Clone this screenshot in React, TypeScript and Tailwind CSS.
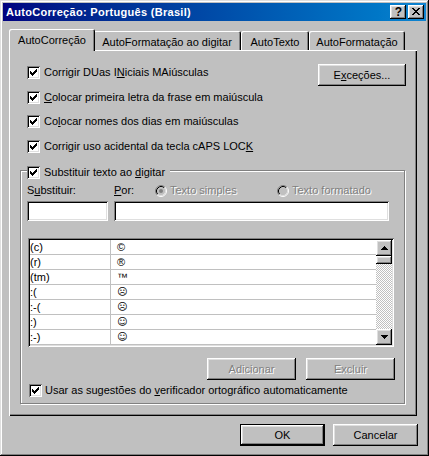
import React from "react";

const raised =
  "shadow-[inset_-1px_-1px_0_#000,inset_1px_1px_0_#fff,inset_-2px_-2px_0_#808080,inset_2px_2px_0_#dfdfdf]";
const sunken =
  "shadow-[inset_1px_1px_0_#808080,inset_-1px_-1px_0_#fff,inset_2px_2px_0_#000,inset_-2px_-2px_0_#dfdfdf]";

function Check() {
  return (
    <span className={`w-[13px] h-[13px] shrink-0 bg-white flex items-center justify-center ${sunken}`}>
      <svg width="7" height="7" viewBox="0 0 7 7" shapeRendering="crispEdges">
        <rect x="6" y="0" width="1" height="1" fill="#000" />
        <rect x="5" y="1" width="2" height="1" fill="#000" />
        <rect x="0" y="2" width="1" height="1" fill="#000" />
        <rect x="4" y="2" width="3" height="1" fill="#000" />
        <rect x="0" y="3" width="2" height="1" fill="#000" />
        <rect x="3" y="3" width="3" height="1" fill="#000" />
        <rect x="0" y="4" width="5" height="1" fill="#000" />
        <rect x="1" y="5" width="3" height="1" fill="#000" />
        <rect x="2" y="6" width="1" height="1" fill="#000" />
      </svg>
    </span>
  );
}

function Radio({ dot }: { dot?: boolean }) {
  return (
    <svg width="12" height="12" viewBox="0 0 12 12" className="shrink-0">
      <circle cx="6" cy="6" r="5" fill="#c0c0c0" />
      <path d="M2.11 9.89 A5.5 5.5 0 0 1 9.89 2.11" fill="none" stroke="#808080" strokeWidth="1" />
      <path d="M9.89 2.11 A5.5 5.5 0 0 1 2.11 9.89" fill="none" stroke="#fff" strokeWidth="1" />
      <path d="M2.82 9.18 A4.5 4.5 0 0 1 9.18 2.82" fill="none" stroke="#000" strokeWidth="1" />
      <path d="M9.18 2.82 A4.5 4.5 0 0 1 2.82 9.18" fill="none" stroke="#dfdfdf" strokeWidth="1" />
      {dot && <circle cx="6" cy="6" r="2" fill="#808080" />}
    </svg>
  );
}

function CheckRow({ children, className = "" }: { children: React.ReactNode; className?: string }) {
  return (
    <div className={`flex items-center h-[13px] gap-[4px] whitespace-nowrap ${className}`}>
      <Check />
      <span>{children}</span>
    </div>
  );
}

function Arrow({ down }: { down?: boolean }) {
  return (
    <svg width="7" height="4" viewBox="0 0 7 4" shapeRendering="crispEdges">
      {down ? (
        <>
          <rect x="0" y="0" width="7" height="1" fill="#000" />
          <rect x="1" y="1" width="5" height="1" fill="#000" />
          <rect x="2" y="2" width="3" height="1" fill="#000" />
          <rect x="3" y="3" width="1" height="1" fill="#000" />
        </>
      ) : (
        <>
          <rect x="3" y="0" width="1" height="1" fill="#000" />
          <rect x="2" y="1" width="3" height="1" fill="#000" />
          <rect x="1" y="2" width="5" height="1" fill="#000" />
          <rect x="0" y="3" width="7" height="1" fill="#000" />
        </>
      )}
    </svg>
  );
}

const rows: [string, string, boolean][] = [
  ["(c)", "©", false],
  ["(r)", "®", false],
  ["(tm)", "™", false],
  [":(", "☹", true],
  [":-(", "☹", true],
  [":)", "☺", true],
  [":-)", "☺", true],
];

export default function App() {
  return (
    <div
      className={`w-[429px] h-[456px] bg-[#c0c0c0] p-[3px] flex flex-col font-['Liberation_Sans',Arial,sans-serif] text-[11px] leading-[13px] text-black select-none shadow-[inset_-1px_-1px_0_#000,inset_1px_1px_0_#dfdfdf,inset_-2px_-2px_0_#808080,inset_2px_2px_0_#fff]`}
    >
      {/* Title bar */}
      <div className="h-[18px] shrink-0 flex items-center bg-gradient-to-r from-[#000080] to-[#1084d0] pl-[3px] pr-[2px]">
        <span className="flex-1 font-bold text-white leading-[18px] tracking-[0.3px] whitespace-nowrap">
          AutoCorreção: Português (Brasil)
        </span>
        <div className="flex gap-[2px]">
          <div className={`w-[16px] h-[14px] bg-[#c0c0c0] flex items-center justify-center ${raised}`}>
            <span className="font-bold text-[12px] leading-none pl-[1px]">?</span>
          </div>
          <div className={`w-[16px] h-[14px] bg-[#c0c0c0] flex items-center justify-center ${raised}`}>
            <svg width="8" height="7" viewBox="0 0 8 7" shapeRendering="crispEdges" className="ml-[-1px] mt-[-1px]">
              <rect x="0" y="0" width="2" height="1" fill="#000" />
              <rect x="6" y="0" width="2" height="1" fill="#000" />
              <rect x="1" y="1" width="2" height="1" fill="#000" />
              <rect x="5" y="1" width="2" height="1" fill="#000" />
              <rect x="2" y="2" width="4" height="1" fill="#000" />
              <rect x="3" y="3" width="2" height="1" fill="#000" />
              <rect x="2" y="4" width="4" height="1" fill="#000" />
              <rect x="1" y="5" width="2" height="1" fill="#000" />
              <rect x="5" y="5" width="2" height="1" fill="#000" />
              <rect x="0" y="6" width="2" height="1" fill="#000" />
              <rect x="6" y="6" width="2" height="1" fill="#000" />
            </svg>
          </div>
        </div>
      </div>

      {/* Tabs */}
      <div className="mt-[8px] ml-[6px] flex items-end h-[22px] -mb-[1px] relative z-10 whitespace-nowrap">
        <div className="w-[86px] h-[22px] mr-[-2px] relative z-10 bg-[#c0c0c0] text-center pt-[5px] rounded-t-[2px] shadow-[inset_1px_1px_0_#fff,inset_-1px_0_0_#000,inset_-2px_0_0_#808080]">
          AutoCorreção
        </div>
        <div className="w-[148px] h-[19px] mb-[1px] bg-[#c0c0c0] text-center pt-[5px] rounded-t-[2px] shadow-[inset_1px_1px_0_#fff,inset_-1px_0_0_#000,inset_-2px_0_0_#808080]">
          AutoFormatação ao digitar
        </div>
        <div className="w-[68px] h-[19px] mb-[1px] bg-[#c0c0c0] text-center pt-[5px] rounded-t-[2px] shadow-[inset_1px_1px_0_#fff,inset_-1px_0_0_#000,inset_-2px_0_0_#808080]">
          AutoTexto
        </div>
        <div className="w-[96px] h-[19px] mb-[1px] bg-[#c0c0c0] text-center pt-[5px] rounded-t-[2px] shadow-[inset_1px_1px_0_#fff,inset_-1px_0_0_#000,inset_-2px_0_0_#808080]">
          AutoFormatação
        </div>
      </div>

      {/* Panel */}
      <div className="w-[408px] h-[366px] ml-[6px] bg-[#c0c0c0] flex flex-col shrink-0 shadow-[inset_1px_1px_0_#fff,inset_-1px_-1px_0_#000,inset_-2px_-2px_0_#808080]">
        <div className="flex mt-[14px] pl-[18px] pr-[11px]">
          <div className="flex flex-col pt-[2px]">
            <CheckRow>
              Corrigir DUas I<span className="underline underline-offset-[1px]">N</span>iciais MAiúsculas
            </CheckRow>
            <CheckRow className="mt-[12px]">
              <span className="underline underline-offset-[1px]">C</span>olocar primeira letra da frase em maiúscula
            </CheckRow>
            <CheckRow className="mt-[11px]">
              Co<span className="underline underline-offset-[1px]">l</span>ocar nomes dos dias em maiúsculas
            </CheckRow>
            <CheckRow className="mt-[12px]">
              Corrigir uso acidental da tecla cAPS LOC<span className="underline underline-offset-[1px]">K</span>
            </CheckRow>
          </div>
          <div className={`ml-auto w-[88px] h-[22px] flex items-center justify-center ${raised}`}>
            <span>
              E<span className="underline underline-offset-[1px]">x</span>ceções...
            </span>
          </div>
        </div>

        {/* Group box */}
        <div className="mt-[17px] ml-[11px] w-[385px] flex flex-col border border-[#808080] pb-[6px] shadow-[inset_1px_1px_0_#fff,1px_1px_0_#fff]">
          <div className="-mt-[5px] ml-[6px] self-start flex items-center gap-[4px] pr-[5px] bg-[#c0c0c0] h-[13px] whitespace-nowrap">
            <Check />
            <span>
              Substituir texto ao <span className="underline underline-offset-[1px]">d</span>igitar
            </span>
          </div>

          <div className="mt-[5px] flex items-center h-[13px] pl-[6px] whitespace-nowrap">
            <span className="w-[87px]">
              S<span className="underline underline-offset-[1px]">u</span>bstituir:
            </span>
            <span className="w-[41px]">
              <span className="underline underline-offset-[1px]">P</span>or:
            </span>
            <div className="w-[122px] flex items-center gap-[3px]">
              <Radio dot />
              <span className="text-[#808080] [text-shadow:1px_1px_0_#fff]">Texto simples</span>
            </div>
            <div className="flex items-center gap-[3px]">
              <Radio />
              <span className="text-[#808080] [text-shadow:1px_1px_0_#fff]">Texto formatado</span>
            </div>
          </div>

          <div className="mt-[4px] flex gap-[6px] pl-[6px]">
            <div className={`w-[81px] h-[20px] bg-white ${sunken}`} />
            <div className={`w-[275px] h-[20px] bg-white ${sunken}`} />
          </div>

          <div className={`mt-[17px] ml-[7px] w-[366px] h-[109px] bg-white p-[2px] flex ${sunken}`}>
            <div className="flex-1 flex flex-col">
              {rows.map(([a, b, emo], i) => (
                <div key={i} className="flex h-[15px] border-b border-[#c0c0c0]">
                  <div className="w-[81px] border-r border-[#c0c0c0] leading-[14px] whitespace-nowrap">{a}</div>
                  <div
                    className={
                      emo
                        ? "pl-[6px] leading-[14px] text-[10px] font-['DejaVu_Sans',sans-serif]"
                        : "pl-[6px] leading-[14px]"
                    }
                  >
                    {b}
                  </div>
                </div>
              ))}
            </div>
            <div className="w-[16px] flex flex-col">
              <div className={`h-[16px] bg-[#c0c0c0] flex items-center justify-center ${raised}`}>
                <Arrow />
              </div>
              <div className={`h-[8px] bg-[#c0c0c0] ${raised}`} />
              <div className="flex-1 bg-[conic-gradient(#fff_25%,#c0c0c0_0_50%,#fff_0_75%,#c0c0c0_0)] bg-[length:2px_2px]" />
              <div className={`h-[16px] bg-[#c0c0c0] flex items-center justify-center ${raised}`}>
                <Arrow down />
              </div>
            </div>
          </div>

          <div className="mt-[11px] flex justify-end gap-[10px] pr-[9px]">
            <div className={`w-[89px] h-[22px] flex items-center justify-center ${raised}`}>
              <span className="text-[#808080] [text-shadow:1px_1px_0_#fff]">Adicionar</span>
            </div>
            <div className={`w-[89px] h-[22px] flex items-center justify-center ${raised}`}>
              <span className="text-[#808080] [text-shadow:1px_1px_0_#fff]">Excluir</span>
            </div>
          </div>

          <div className="mt-[4px] ml-[8px] flex items-center gap-[3px] h-[13px] whitespace-nowrap">
            <Check />
            <span>
              Usar as sugestões do <span className="underline underline-offset-[1px]">v</span>erificador ortográfico
              automaticamente
            </span>
          </div>
        </div>
      </div>

      {/* Bottom buttons */}
      <div className="mt-[8px] flex justify-end gap-[8px] pr-[8px]">
        <div className="w-[85px] h-[22px] border border-black">
          <div className={`w-full h-full flex items-center justify-center ${raised}`}>OK</div>
        </div>
        <div className={`w-[85px] h-[22px] flex items-center justify-center ${raised}`}>Cancelar</div>
      </div>
    </div>
  );
}
